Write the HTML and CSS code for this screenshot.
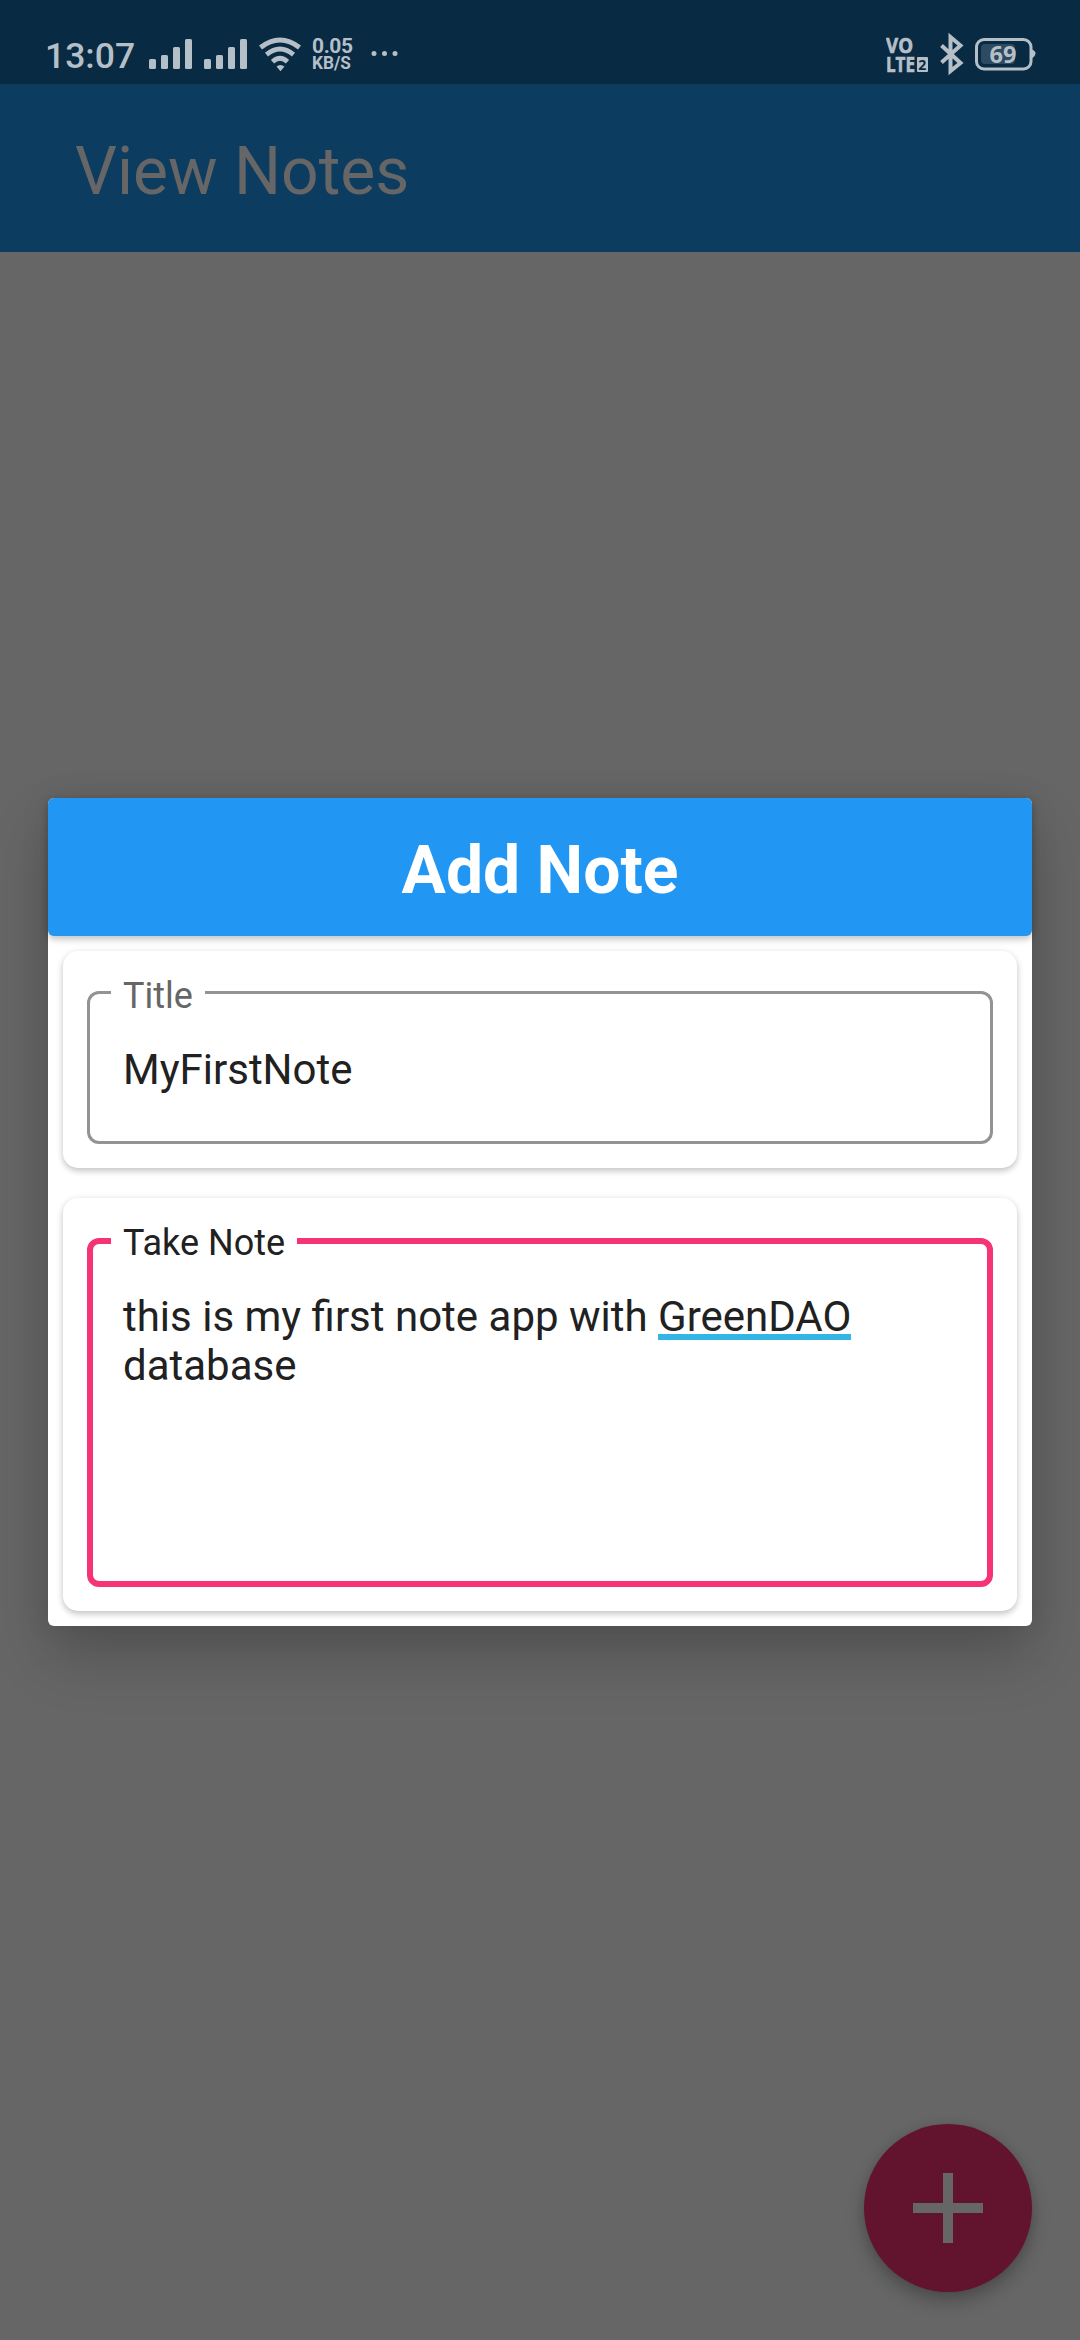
FILE: index.html
```html
<!DOCTYPE html>
<html lang="en">
<head>
<meta charset="utf-8">
<title>View Notes</title>
<link rel="stylesheet" href="styles.css">
</head>
<body>
<div class="screen">
  <header class="status-bar">
    <span class="clock">13:07</span>
    <svg class="status-icon signal" width="44" height="84" viewBox="0 0 44 84"><rect x="0" y="59" width="7" height="10" rx="1.5"/><rect x="12" y="55" width="7" height="14" rx="1.5"/><rect x="24" y="47" width="7" height="22" rx="1.5"/><rect x="36" y="39" width="7" height="30" rx="1.5"/></svg>
    <svg class="status-icon signal" width="44" height="84" viewBox="0 0 44 84"><rect x="0" y="59" width="7" height="10" rx="1.5"/><rect x="12" y="55" width="7" height="14" rx="1.5"/><rect x="24" y="47" width="7" height="22" rx="1.5"/><rect x="36" y="39" width="7" height="30" rx="1.5"/></svg>
    <svg class="status-icon wifi" width="42" height="84" viewBox="0 0 42 84"><g fill="none" stroke="currentColor" stroke-width="4.8"><path d="M1.500 47.500Q21 32.500 40.500 47.500"/><path d="M7.500 54.700Q21 43.500 34.500 54.700"/><path d="M13.500 61.700Q21 55 28.500 61.700"/></g><path d="M17.500 66.500Q21 63.500 25.500 66.500L21.500 71.200Z"/></svg>
    <svg class="status-icon speed" width="42" height="84" viewBox="0 0 42 84"><text x="0" y="53" font-size="21" textLength="41">0.05</text><text x="0" y="69" font-size="17.500" textLength="39" lengthAdjust="spacingAndGlyphs">KB/S</text></svg>
    <svg class="status-icon more" width="28" height="84" viewBox="0 0 28 84"><circle cx="3" cy="53.500" r="2.500"/><circle cx="13.500" cy="53.500" r="2.500"/><circle cx="24" cy="53.500" r="2.500"/></svg>
    <svg class="status-icon volte" width="43" height="84" viewBox="0 0 43 84"><g stroke="currentColor" stroke-width=".7"><text class="wide" x="0" y="53" font-size="21" textLength="27" lengthAdjust="spacingAndGlyphs">VO</text><text class="wide" x="0" y="71.500" font-size="21" textLength="29" lengthAdjust="spacingAndGlyphs">LTE</text></g><rect x="31" y="57" width="11" height="15" rx="1"/><text class="wide cut" x="32.300" y="70" font-size="14">2</text></svg>
    <svg class="status-icon bluetooth" width="24" height="84" viewBox="0 0 24 84"><path d="M1.500 45.500L20.500 63L10.500 71V37L20.500 45.500L1.500 62.500" fill="none" stroke="currentColor" stroke-width="4"/></svg>
    <svg class="status-icon battery" width="61" height="84" viewBox="0 0 61 84"><rect x="1.500" y="39.500" width="54.500" height="29.500" rx="7.500" fill="none" stroke="currentColor" stroke-width="3"/><path d="M57 49.500Q60.500 51 60.500 53.500Q60.500 56 57 58.500Z"/><rect x="6" y="44" width="34" height="20" rx="4" opacity=".22"/><text class="wide" x="14.500" y="63" font-size="23.500" textLength="27" lengthAdjust="spacingAndGlyphs">69</text></svg>
  </header>
  <div class="app-bar"><h1 class="app-title">View Notes</h1></div>
  <main class="content">
    <section class="dialog">
      <h2 class="dialog-title">Add Note</h2>
      <div class="dialog-body">
        <div class="card">
          <div class="field">
            <span class="label">Title</span>
            <div class="value">MyFirstNote</div>
          </div>
        </div>
        <div class="card">
          <div class="field field-focused">
            <span class="label">Take Note</span>
            <div class="value">this is my first note app with <span class="suggestion">GreenDAO</span> database</div>
          </div>
        </div>
      </div>
    </section>
    <button class="fab" aria-label="Add note"><svg width="70" height="70" viewBox="0 0 70 70"><path d="M30 0h10v30h30v10H40v30H30V40H0V30h30z" fill="#666"/></svg></button>
  </main>
</div>
</body>
</html>
```
FILE: styles.css
```css
* { box-sizing: border-box; }
body { margin: 0; font-family: Roboto, sans-serif; }
.screen {
  display: flex;
  flex-direction: column;
  width: 1080px;
  height: 2340px;
  background: #666;
  overflow: hidden;
}
.status-bar {
  display: flex;
  height: 84px;
  padding: 0 44px 0 45px;
  background: #082a43;
  color: #b5bfc7;
}
.clock {
  width: 104px;
  padding-top: 35px;
  font-size: 35.5px;
  font-weight: 500;
  line-height: 42px;
}
.status-icon {
  flex: none;
  display: block;
  fill: currentColor;
  font-family: Roboto, sans-serif;
  font-weight: 700;
}
.signal { margin-right: 11px; }
.wifi { margin-right: 11px; }
.speed { margin-right: 17px; }
.volte { margin-left: auto; margin-right: 11px; }
.bluetooth { margin-right: 11px; }
.wide { font-family: "Open Sans", sans-serif; }
.cut { fill: #082a43; }
.app-bar {
  display: flex;
  align-items: center;
  height: 168px;
  padding: 8px 0 0 75px;
  background: #0d3c61;
}
.app-title {
  margin: 0;
  color: #666;
  font-size: 66px;
  font-weight: 400;
  line-height: 78px;
}
.content {
  flex: 1;
  display: flex;
  flex-direction: column;
  padding: 546px 48px 48px;
}
.dialog {
  height: 828px;
  background: #fff;
  border-radius: 6px;
  box-shadow: 0 30px 60px rgba(0, 0, 0, .2), 0 0 30px rgba(0, 0, 0, .08);
}
.dialog-title {
  display: flex;
  align-items: center;
  justify-content: center;
  height: 138px;
  margin: 0;
  padding-top: 8px;
  background: #2196f3;
  border-radius: 6px;
  box-shadow: 0 3px 6px rgba(0, 0, 0, .2), 0 3px 12px rgba(0, 0, 0, .06);
  color: #fff;
  font-size: 66px;
  font-weight: 700;
  line-height: 78px;
}
.dialog-body {
  display: flex;
  flex-direction: column;
  gap: 30px;
  padding: 15px;
}
.card {
  padding: 40px 24px 24px;
  border-radius: 15px;
  background: #fff;
  box-shadow: 0 3px 6px rgba(0, 0, 0, .2), 0 1px 10px rgba(0, 0, 0, .06);
}
.field {
  display: flex;
  flex-direction: column;
  align-items: flex-start;
  height: 153px;
  padding-left: 21px;
  border: 3px solid #939393;
  border-radius: 12px;
}
.label {
  margin-top: -19px;
  padding: 0 12px;
  background: #fff;
  color: #666;
  font-size: 36px;
  line-height: 42px;
}
.value {
  width: 800px;
  margin: 28px 0 0 12px;
  color: #212121;
  font-size: 42px;
  line-height: 49px;
}
.field-focused {
  height: 349px;
  padding-left: 18px;
  border: 6px solid #f73378;
}
.field-focused .label { margin-top: -22px; color: #212121; }
.suggestion {
  background: linear-gradient(#33b5e5, #33b5e5) 0 42px / 100% 6px no-repeat;
}
.fab {
  display: flex;
  align-items: center;
  justify-content: center;
  align-self: flex-end;
  width: 168px;
  height: 168px;
  margin-top: auto;
  padding: 0;
  border: 0;
  border-radius: 50%;
  background: #62142f;
  box-shadow: 0 9px 18px rgba(0, 0, 0, .25), 0 0 10px rgba(0, 0, 0, .08);
}
```
